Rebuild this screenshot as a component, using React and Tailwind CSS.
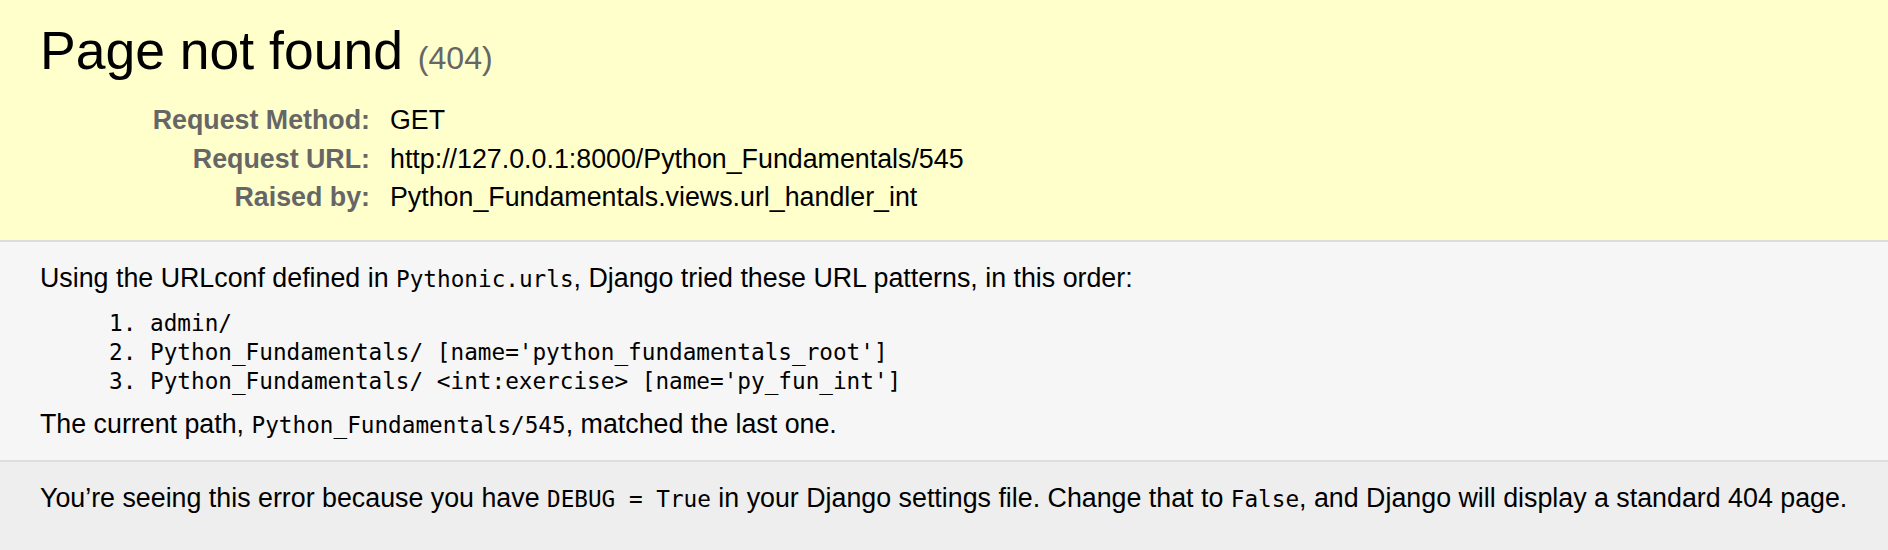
import React from "react";

const sans = { fontFamily: '"Liberation Sans", Arial, sans-serif' };

function Code({ children }) {
  return (
    <code className="font-['DejaVu_Sans_Mono',monospace] text-[22.7px]">{children}</code>
  );
}

function Row({ label, value }) {
  return (
    <div className="flex items-start py-[4px] leading-[30.7px]">
      <div className="w-[330px] shrink-0 text-right font-bold text-[#666]">{label}</div>
      <div className="pl-[20px] text-black">{value}</div>
    </div>
  );
}

export default function App() {
  return (
    <div
      className="min-h-[550px] bg-[#eee] text-black text-[26.8px] font-['Liberation_Sans',Arial,sans-serif]"
      style={sans}
    >
      <div className="bg-[#ffc] border-b-2 border-[#ddd] pt-[20px] pb-[23px] px-[40px]">
        <h1 className="text-[53.5px] leading-[62px] font-normal mb-[19px]">
          Page not found <span className="text-[32.1px] leading-none text-[#666]">(404)</span>
        </h1>
        <div className="flex flex-col">
          <Row label="Request Method:" value="GET" />
          <Row label="Request URL:" value="http://127.0.0.1:8000/Python_Fundamentals/545" />
          <Row label="Raised by:" value="Python_Fundamentals.views.url_handler_int" />
        </div>
      </div>
      <div className="bg-[#f6f6f6] border-b-2 border-[#ddd] pt-[21px] pb-[20px] px-[40px]">
        <p className="leading-[30px]">
          Using the URLconf defined in <Code>Pythonic.urls</Code>, Django tried these URL patterns, in this order:
        </p>
        <ol className="list-decimal list-outside ml-[110px] mt-[15px] mb-[13px] font-['DejaVu_Sans_Mono',monospace] text-[22.7px] leading-[29px]">
          <li>admin/</li>
          <li>Python_Fundamentals/ [name='python_fundamentals_root']</li>
          <li>Python_Fundamentals/ &lt;int:exercise&gt; [name='py_fun_int']</li>
        </ol>
        <p className="leading-[30px]">
          The current path, <Code>Python_Fundamentals/545</Code>, matched the last one.
        </p>
      </div>
      <div className="bg-[#eee] pt-[21px] px-[40px] pb-[20px]">
        <p className="leading-[30px]">
          You’re seeing this error because you have <Code>DEBUG = True</Code> in your Django settings file. Change that to <Code>False</Code>, and Django will display a standard 404 page.
        </p>
      </div>
    </div>
  );
}
